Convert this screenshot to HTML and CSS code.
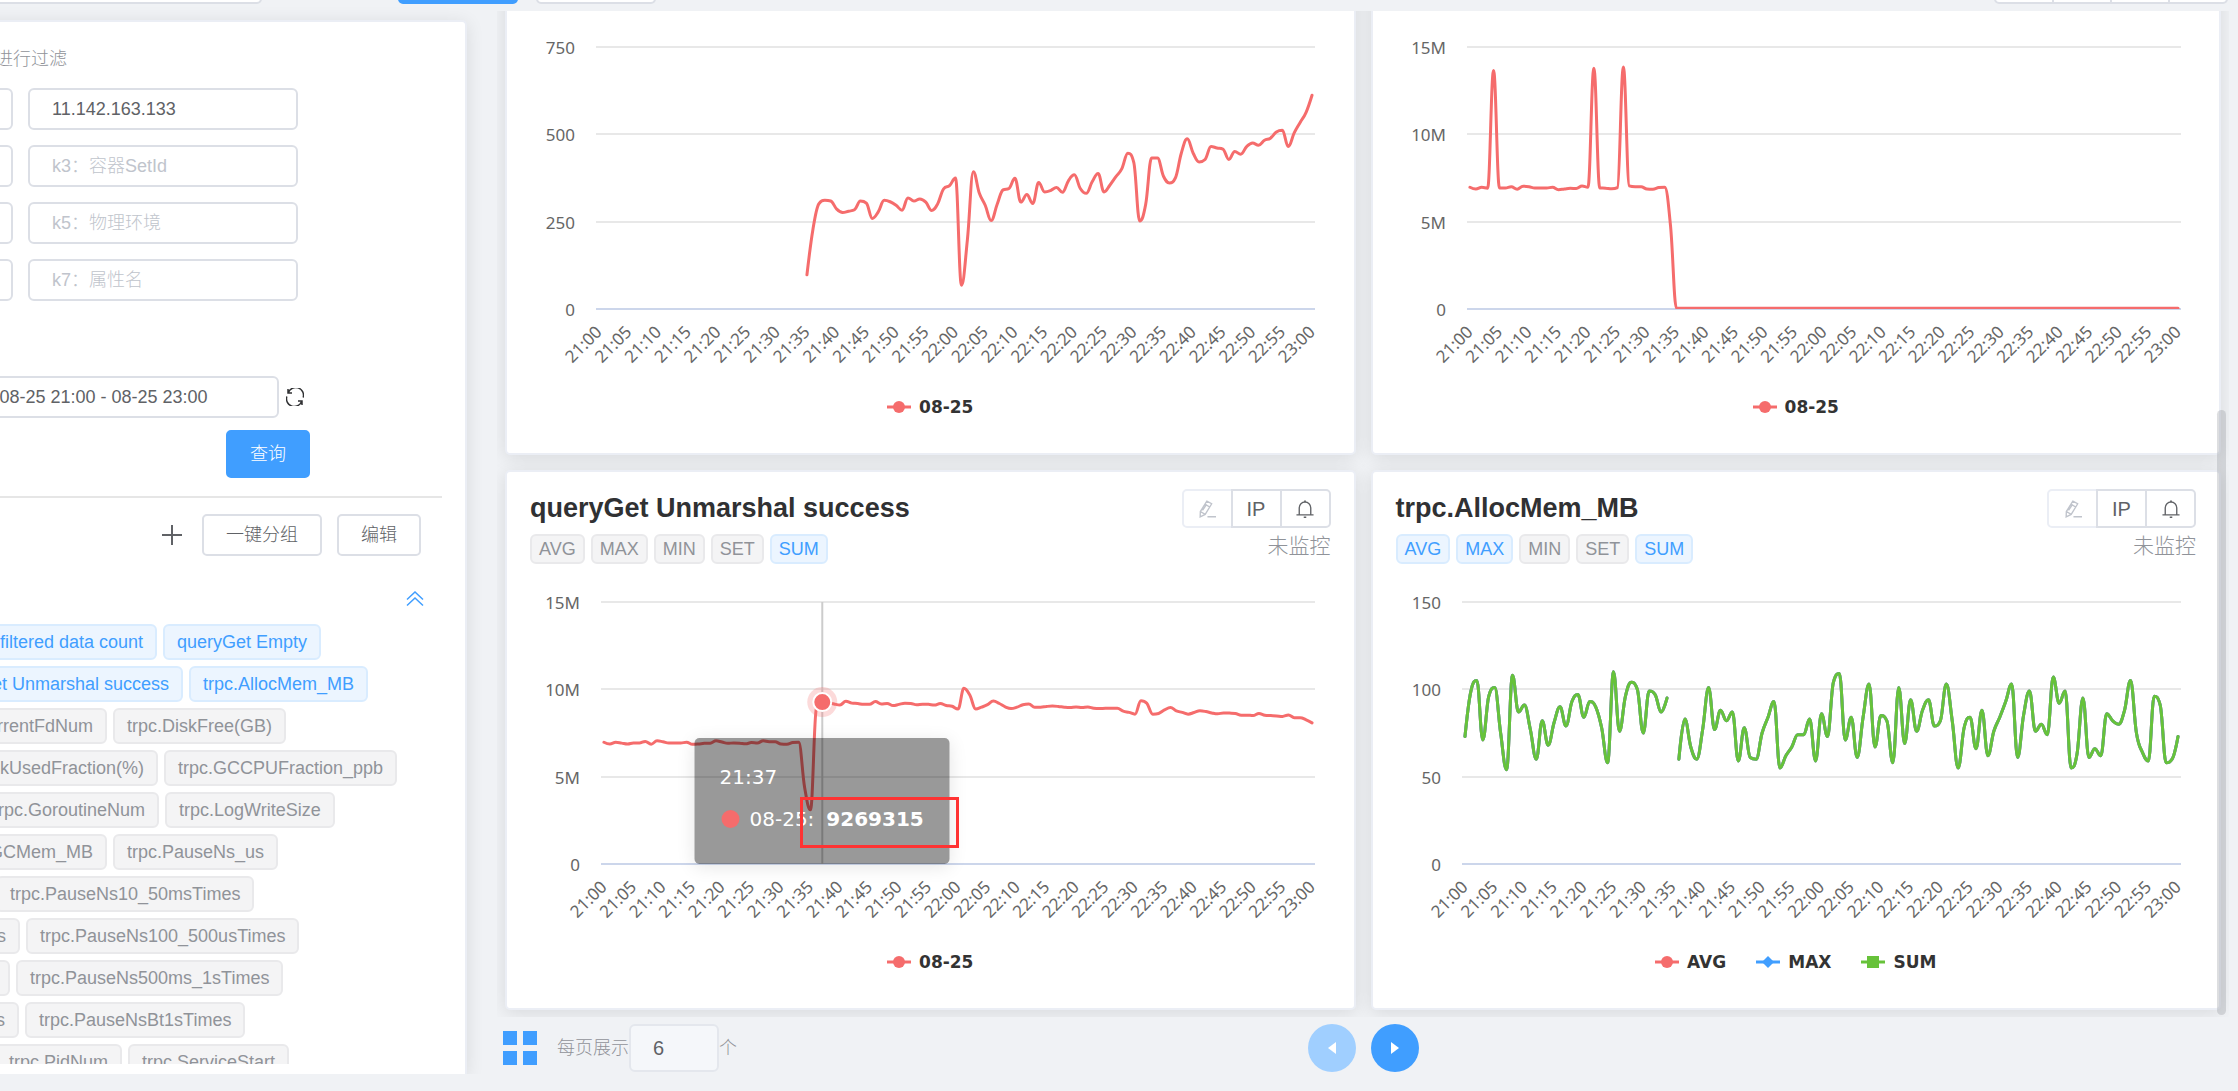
FILE: index.html
```html
<!DOCTYPE html>
<html lang="zh-CN">
<head>
<meta charset="utf-8">
<meta name="viewport" content="width=device-width, initial-scale=1">
<title>queryGet Unmarshal success</title>
<link rel="stylesheet" href="styles.css">
</head>
<body>
<svg class="sprite" aria-hidden="true">
  <symbol id="icon-edit" viewBox="0 0 20 20">
    <path d="M9.8 1.2 15.2 4.2 8 16 2.4 18.8 2.6 12.8Z M7.6 4.6 13 7.8 M2.6 12.8 8 16 M5 11.6 9.6 4.8 M10.5 18.6H20"/>
  </symbol>
  <symbol id="icon-bell" viewBox="0 0 20 20">
    <path d="M3.6 16.5V8.6a6.4 6.4 0 0 1 12.8 0V16.5 M0.5 16.5H19.5 M9 1.2H11 M8.6 19.2H11.4"/>
  </symbol>
</svg>
<div class="app">
  <header class="topbar">
    <input class="topbar-search" type="text" aria-label="搜索">
    <button class="topbar-button topbar-button-primary" type="button" aria-label="查询"></button>
    <button class="topbar-button" type="button" aria-label="重置"></button>
    <div class="topbar-group">
      <button type="button" aria-label="1"></button><button type="button" aria-label="2"></button><button type="button" aria-label="3"></button><button type="button" aria-label="4"></button>
    </div>
  </header>

  <aside class="side">
    <div class="panel">
      <p class="panel-hint">进行过滤</p>
      <div class="filters">
        <input class="field" type="text" aria-label="k0"><input class="field" type="text" aria-label="k1" value="11.142.163.133">
        <input class="field" type="text" aria-label="k2"><input class="field" type="text" aria-label="k3" placeholder="k3：容器SetId">
        <input class="field" type="text" aria-label="k4"><input class="field" type="text" aria-label="k5" placeholder="k5：物理环境">
        <input class="field" type="text" aria-label="k6"><input class="field" type="text" aria-label="k7" placeholder="k7：属性名">
      </div>
      <div class="range">
        <input class="field field-range" type="text" aria-label="时间" value="08-25 21:00 - 08-25 23:00">
        <button class="icon-button" type="button" aria-label="刷新">
          <svg class="icon icon-refresh" viewBox="0 0 18 18"><path d="M2 1V5H6 M2.4 4.6A7.8 7.8 0 0 1 17.2 9.5 M16 17V13H12 M15.6 13.4A7.8 7.8 0 0 1 0.8 8.5"/></svg>
        </button>
      </div>
      <div class="submit"><button class="button button-primary" type="button">查询</button></div>
      <hr class="rule">
      <div class="actions">
        <button class="icon-button" type="button" aria-label="添加">
          <svg class="icon icon-plus" viewBox="0 0 20 20"><path d="M10 0V20 M0 10H20"/></svg>
        </button>
        <button class="button button-wide" type="button">一键分组</button>
        <button class="button" type="button">编辑</button>
      </div>
      <div class="fold">
        <button class="icon-button" type="button" aria-label="收起">
          <svg class="icon icon-fold" viewBox="0 0 18 16"><path d="M1 8.5 9 1 17 8.5 M1 14.5 9 7 17 14.5"/></svg>
        </button>
      </div>
      <div class="metrics">
        <div class="metric-row" style="--lead:414px"><span class="tag tag-on">filtered data count</span><span class="tag tag-on">queryGet Empty</span></div>
        <div class="metric-row" style="--lead:440px"><span class="tag tag-on">queryGet Unmarshal success</span><span class="tag tag-on">trpc.AllocMem_MB</span></div>
        <div class="metric-row" style="--lead:364px"><span class="tag">trpc.CurrentFdNum</span><span class="tag">trpc.DiskFree(GB)</span></div>
        <div class="metric-row" style="--lead:415px"><span class="tag">trpc.DiskUsedFraction(%)</span><span class="tag">trpc.GCCPUFraction_ppb</span></div>
        <div class="metric-row" style="--lead:416px"><span class="tag">trpc.GoroutineNum</span><span class="tag">trpc.LogWriteSize</span></div>
        <div class="metric-row" style="--lead:364px"><span class="tag">trpc.NextGCMem_MB</span><span class="tag">trpc.PauseNs_us</span></div>
        <div class="metric-row" style="--lead:247px"><span class="tag"></span><span class="tag">trpc.PauseNs10_50msTimes</span></div>
        <div class="metric-row" style="--lead:277px"><span class="tag">trpc.PauseNs100_500msTimes</span><span class="tag">trpc.PauseNs100_500usTimes</span></div>
        <div class="metric-row" style="--lead:267px"><span class="tag"></span><span class="tag">trpc.PauseNs500ms_1sTimes</span></div>
        <div class="metric-row" style="--lead:276px"><span class="tag">trpc.PauseNs50_100msTimes</span><span class="tag">trpc.PauseNsBt1sTimes</span></div>
        <div class="metric-row" style="--lead:379px"><span class="tag">trpc.PidNum</span><span class="tag">trpc.ServiceStart</span></div>
      </div>
    </div>
  </aside>

  <main class="main">
    <div class="board">
      <div class="cards">
        <section class="card">
          <div class="card-head"></div>
          <div class="chart" data-chart="empty"></div>
          <ul class="legend"><li><svg class="key key-red" viewBox="0 0 24 14"><path d="M0 7H24"/><circle cx="12" cy="7" r="6"/></svg>08-25</li></ul>
        </section>
        <section class="card">
          <div class="card-head"></div>
          <div class="chart" data-chart="total"></div>
          <ul class="legend"><li><svg class="key key-red" viewBox="0 0 24 14"><path d="M0 7H24"/><circle cx="12" cy="7" r="6"/></svg>08-25</li></ul>
        </section>
        <section class="card">
          <div class="card-head">
            <div class="card-info">
              <h2 class="card-title">queryGet Unmarshal success</h2>
              <div class="modes"><span class="mode">AVG</span><span class="mode">MAX</span><span class="mode">MIN</span><span class="mode">SET</span><span class="mode tag-on">SUM</span></div>
            </div>
            <div class="card-tools">
              <div class="tool-group">
                <button class="tool" type="button" disabled aria-label="编辑"><svg class="icon icon-tool"><use href="#icon-edit"/></svg></button>
                <button class="tool" type="button">IP</button>
                <button class="tool" type="button" aria-label="告警"><svg class="icon icon-tool"><use href="#icon-bell"/></svg></button>
              </div>
              <span class="watch">未监控</span>
            </div>
          </div>
          <div class="chart" data-chart="success">
            <div class="tooltip">
              <div>21:37</div>
              <div class="tooltip-line"><i class="tooltip-dot"></i><span>08-25:</span><b>9269315</b></div>
            </div>
            <div class="callout"></div>
          </div>
          <ul class="legend"><li><svg class="key key-red" viewBox="0 0 24 14"><path d="M0 7H24"/><circle cx="12" cy="7" r="6"/></svg>08-25</li></ul>
        </section>
        <section class="card">
          <div class="card-head">
            <div class="card-info">
              <h2 class="card-title">trpc.AllocMem_MB</h2>
              <div class="modes"><span class="mode tag-on">AVG</span><span class="mode tag-on">MAX</span><span class="mode">MIN</span><span class="mode">SET</span><span class="mode tag-on">SUM</span></div>
            </div>
            <div class="card-tools">
              <div class="tool-group">
                <button class="tool" type="button" disabled aria-label="编辑"><svg class="icon icon-tool"><use href="#icon-edit"/></svg></button>
                <button class="tool" type="button">IP</button>
                <button class="tool" type="button" aria-label="告警"><svg class="icon icon-tool"><use href="#icon-bell"/></svg></button>
              </div>
              <span class="watch">未监控</span>
            </div>
          </div>
          <div class="chart" data-chart="memory"></div>
          <ul class="legend">
            <li><svg class="key key-red" viewBox="0 0 24 14"><path d="M0 7H24"/><circle cx="12" cy="7" r="6"/></svg>AVG</li>
            <li><svg class="key key-blue" viewBox="0 0 24 14"><path d="M0 7H24"/><path class="key-fill" d="M12 1 18 7 12 13 6 7Z"/></svg>MAX</li>
            <li><svg class="key key-green" viewBox="0 0 24 14"><path d="M0 7H24"/><rect x="6" y="1" width="12" height="12"/></svg>SUM</li>
          </ul>
        </section>
      </div>
      <div class="scroll-thumb"></div>
    </div>
    <footer class="pager">
      <div class="page-size">
        <svg class="tiles" viewBox="0 0 34 34" aria-hidden="true"><path d="M0 0h14v14H0zM20 0h14v14H20zM0 20h14v14H0zM20 20h14v14H20z"/></svg>
        <label for="page-size">每页展示</label><input id="page-size" class="size-field" type="text" value="6"><span>个</span>
      </div>
      <div class="pager-buttons">
        <button class="round round-off" type="button" aria-label="上一页" disabled><svg viewBox="0 0 8 12"><path d="M8 0V12L0 6Z"/></svg></button>
        <button class="round" type="button" aria-label="下一页"><svg viewBox="0 0 8 12"><path d="M0 0V12L8 6Z"/></svg></button>
      </div>
    </footer>
  </main>
</div>
<script src="charts.js"></script>
</body>
</html>
```
FILE: styles.css
```css
* { box-sizing: border-box; }

body {
  margin: 0;
  overflow: hidden;
  background: #f0f2f5;
  color: #606266;
  font: 300 18px/24px "Liberation Sans", Arial, "Noto Sans CJK SC", sans-serif;
}

button, input { font: inherit; color: inherit; }
p, ul, h2 { margin: 0; padding: 0; }

.sprite { position: absolute; width: 0; height: 0; }

/* The shell is scrolled sideways, so its left part lies outside the window. */
.app {
  display: grid;
  grid-template: auto minmax(0, 1fr) / 763px minmax(0, 1fr);
  column-gap: 15px;
  height: 100vh;
  margin-left: -281px;
}

/* top bar */
.topbar {
  grid-column: 1 / -1;
  display: flex;
  height: 42px;
  margin-top: -38px;
  padding-right: 10px;
}
.topbar-search {
  width: 543px;
  margin-right: 136px;
  border: 2px solid #dcdfe6;
  border-radius: 5px;
  background: #fff;
}
.topbar-button {
  width: 120px;
  margin-right: 18px;
  border: 2px solid #dcdfe6;
  border-radius: 5px;
  background: #fff;
}
.topbar-button-primary { border-color: #409eff; background: #409eff; }
.topbar-group { display: flex; margin-left: auto; }
.topbar-group button {
  width: 60px;
  margin-left: -2px;
  border: 2px solid #dcdfe6;
  background: #fff;
}
.topbar-group button:first-child { border-bottom-left-radius: 5px; }
.topbar-group button:last-child { border-bottom-right-radius: 5px; }

/* side panel */
.side {
  display: flex;
  margin-bottom: 17px;
  padding: 16px 15px 0 0;
  overflow: hidden;
}
.panel {
  flex: 1;
  display: flex;
  flex-direction: column;
  min-height: 0;
  padding: 24px 23px 10px 22px;
  border: 2px solid #ebeef5;
  border-bottom: 0;
  border-radius: 5px 5px 0 0;
  background: #fff;
  box-shadow: 0 3px 18px rgba(0, 0, 0, .1);
}
.panel > * { flex: none; }
.panel-hint { width: 324px; margin-bottom: 16px; line-height: 26px; text-align: right; color: #909399; }
.filters { display: grid; grid-template-columns: 270px 270px; gap: 15px; }
.field {
  width: 270px;
  height: 42px;
  padding: 0 22px;
  border: 2px solid #dcdfe6;
  border-radius: 6px;
  background: #fff;
}
.field::placeholder { color: #c0c4cc; opacity: 1; }
.range { display: flex; justify-content: flex-end; align-items: center; gap: 7px; width: 561px; margin-top: 75px; }
.field-range { width: 351px; text-align: center; }
.submit { display: flex; justify-content: flex-end; width: 567px; margin-top: 12px; }
.button {
  width: 84px;
  height: 42px;
  padding: 0;
  border: 2px solid #dcdfe6;
  border-radius: 5px;
  background: #fff;
}
.button-wide { width: 120px; }
.button-primary { height: 48px; border-color: #409eff; background: #409eff; color: #fff; }
.icon-button { display: flex; padding: 0; border: 0; background: none; }
.icon { fill: none; stroke: currentColor; stroke-width: 1.5; }
.icon-refresh { width: 18px; height: 18px; color: #303133; }
.icon-plus { width: 20px; height: 20px; margin-right: 5px; stroke-width: 2; }
.icon-fold { width: 18px; height: 16px; color: #409eff; }
.rule { width: 100%; height: 2px; margin: 18px 0 16px; border: 0; background: #e6e6e6; }
.actions { display: flex; justify-content: flex-end; align-items: center; gap: 15px; padding-right: 21px; }
.fold { display: flex; justify-content: flex-end; margin: 35px 0 17px; padding-right: 18px; }
.panel > .metrics { flex: 1 1 0; min-height: 0; overflow: hidden; }
.metric-row {
  display: grid;
  grid-template-columns: var(--lead) auto;
  justify-content: start;
  column-gap: 6px;
  margin-bottom: 6px;
}
.metric-row .tag:first-child { justify-self: end; }
.tag {
  height: 36px;
  padding: 0 12px;
  border: 2px solid #e9e9eb;
  border-radius: 6px;
  background: #f4f4f5;
  color: #909399;
  line-height: 32px;
  white-space: nowrap;
}
.tag-on { border-color: #d9ecff; background: #ecf5ff; color: #409eff; }

/* board of cards */
.main { display: flex; flex-direction: column; min-width: 0; padding: 7px 9px 0 0; }
.board { position: relative; flex: 1 1 0; min-height: 0; padding: 0 8px; overflow: hidden; }
.cards {
  display: grid;
  grid-template-columns: repeat(2, minmax(0, 1fr));
  gap: 15px;
  margin-top: -96px;
}
.card {
  padding: 17px 23px 34px;
  border: 2px solid #ebeef5;
  border-radius: 5px;
  background: #fff;
  box-shadow: 0 3px 18px rgba(0, 0, 0, .1);
}
.card-head { display: flex; justify-content: space-between; height: 75px; margin-bottom: 26px; }
.card-title { color: #303133; font-size: 27px; line-height: 38px; margin-bottom: 7px; }
.modes { display: flex; gap: 6px; }
.mode {
  height: 30px;
  padding: 0 7px;
  border: 2px solid #e9e9eb;
  border-radius: 6px;
  background: #f4f4f5;
  color: #909399;
  line-height: 26px;
}
.mode.tag-on { border-color: #d9ecff; background: #ecf5ff; color: #409eff; }
.card-tools { display: flex; flex-direction: column; align-items: flex-end; gap: 6px; }
.tool-group { display: flex; }
.tool {
  display: flex;
  justify-content: center;
  align-items: center;
  width: 51px;
  height: 39px;
  margin-left: -2px;
  padding: 0;
  border: 2px solid #dcdfe6;
  background: #fff;
  font-size: 20px;
}
.tool:first-child { border-radius: 5px 0 0 5px; }
.tool:last-child { border-radius: 0 5px 5px 0; }
.tool:disabled { border-color: #ebeef5; color: #c0c4cc; }
.icon-tool { width: 18px; height: 18px; }
.watch { color: #909399; font-size: 21px; }

/* charts */
.chart { position: relative; height: 335px; margin-bottom: 25px; }
.plot { display: block; width: 100%; height: 100%; overflow: visible; font-family: "Noto Sans", sans-serif; font-weight: 400; }
.plot-grid { stroke: #e8e8e8; stroke-width: 2; }
.plot-axis { stroke: #ccd6eb; stroke-width: 2; }
.plot-cross { stroke: #ccc; stroke-width: 2; }
.plot-line { fill: none; stroke-width: 3; stroke-linejoin: round; stroke-linecap: round; }
.plot-halo { fill: #f56c6c; opacity: .25; }
.plot-point { fill: #f56c6c; stroke: #fff; stroke-width: 2; }
.plot text { fill: #666; text-anchor: end; }
.plot-value, .plot-time { font-size: 17px; }
.legend {
  display: flex;
  justify-content: center;
  gap: 30px;
  list-style: none;
  color: #333;
  font: bold 17px/24px "DejaVu Sans", sans-serif;
}
.legend li { display: flex; align-items: center; gap: 8px; }
.key { width: 24px; height: 14px; fill: currentColor; stroke: none; }
.key path { stroke: currentColor; stroke-width: 3; }
.key .key-fill { stroke: none; }
.key-red { color: #f56c6c; }
.key-blue { color: #409eff; }
.key-green { color: #67c23a; }
.tooltip {
  position: absolute;
  left: var(--point-x);
  top: 148px;
  width: 255px;
  height: 126px;
  padding: 25px;
  border-radius: 5px;
  transform: translateX(-50%);
  background: rgba(0, 0, 0, .4);
  box-shadow: 0 3px 18px rgba(0, 0, 0, .1);
  color: #fff;
  font: 20px/28px "DejaVu Sans", sans-serif;
}
.tooltip-line { display: flex; align-items: center; margin-top: 14px; }
.tooltip-dot { width: 18px; height: 18px; margin: 0 10px 0 2px; border-radius: 50%; background: #f56c6c; }
.tooltip-line b { margin-left: 12px; }
.callout {
  position: absolute;
  left: var(--point-x);
  top: 207px;
  width: 159px;
  height: 51px;
  margin-left: -22px;
  border: 3px solid #f33;
}
.scroll-thumb {
  position: absolute;
  top: 399px;
  right: 3px;
  bottom: 2px;
  width: 9px;
  border-radius: 5px;
  background: rgba(144, 147, 153, .3);
}

/* footer */
.pager {
  display: grid;
  grid-template-columns: 1fr auto 1fr;
  padding: 7px 0 19px;
}
.page-size { display: flex; align-items: center; padding-left: 6px; color: #909399; }
.tiles { width: 34px; height: 34px; margin-right: 20px; fill: #409eff; }
.size-field {
  width: 90px;
  height: 48px;
  padding: 0 22px;
  border: 2px solid #e4e7ed;
  border-radius: 6px;
  background: #f5f7fa;
  color: #606266;
  font-size: 20px;
}
.pager-buttons { display: flex; gap: 15px; }
.round {
  display: flex;
  justify-content: center;
  align-items: center;
  width: 48px;
  height: 48px;
  padding: 0;
  border: 0;
  border-radius: 50%;
  background: #409eff;
}
.round-off { background: #a0cfff; }
.round svg { width: 8px; height: 12px; fill: #fff; }
```
FILE: charts.js
```javascript
const charts = {
  empty: {
    left: 66, labels: ['0', '250', '500', '750'], max: 750, start: 35, colors: ['#f56c6c'],
    data: [98,227,301,311,309,286,276,280,284,309,303,259,278,311,307,297,283,318,309,315,306,282,301,344,353,375,68,198,393,332,297,253,299,341,345,374,306,328,302,362,335,339,348,334,367,384,345,331,364,388,335,355,379,402,446,420,252,299,432,432,380,361,375,446,487,446,421,428,465,461,458,428,451,443,465,475,469,483,489,507,512,465,504,534,563,612]
  },
  total: {
    left: 71, labels: ['0', '5M', '10M', '15M'], max: 15, start: 0, colors: ['#f56c6c'],
    data: [6.97,6.87,6.97,6.92,13.66,6.93,6.93,7,6.86,7.03,7,6.93,6.93,6.93,6.97,6.83,6.87,6.91,6.9,7.04,6.97,13.78,6.93,6.92,6.88,6.95,13.85,7.05,7,7,6.87,6.86,6.95,6.97,4.73].concat(Array(86).fill(0.04))
  },
  success: {
    left: 71, labels: ['0', '5M', '10M', '15M'], max: 15, start: 0, colors: ['#f56c6c'], active: 37,
    data: [6.97,6.87,6.97,6.92,6.87,6.93,6.93,7.02,6.86,7.05,7,6.93,6.93,6.93,6.97,6.85,6.87,6.91,6.92,7.05,6.98,6.91,6.93,6.92,6.88,6.95,6.93,7.05,7,7,6.87,6.86,6.95,6.97,4.4,3.1,8.9,9.27,9.25,9.16,9.1,9.32,9.21,9.19,9.14,9.14,9.3,9.16,9.19,9.07,9.14,9.2,9.19,9.12,9.15,9.14,9.1,9.19,9.07,9.03,8.87,10.06,9.67,8.87,8.98,9.12,9.33,9.19,9,8.9,8.98,9.12,9.16,8.98,8.98,9.02,9.04,9.02,8.98,8.96,8.99,8.96,8.99,8.92,8.9,8.91,8.91,8.91,8.75,8.68,8.58,9.35,9.2,8.58,8.62,8.82,8.96,8.77,8.68,8.58,8.67,8.77,8.73,8.65,8.6,8.65,8.64,8.62,8.52,8.52,8.5,8.62,8.52,8.5,8.48,8.45,8.53,8.38,8.38,8.25,8.08]
  },
  memory: {
    left: 66, labels: ['0', '50', '100', '150'], max: 150, start: 0, colors: ['#f56c6c', '#409eff', '#67c23a'],
    data: [73,99,105,71,96,101,75,54,108,87,91,77,60,82,68,81,90,79,93,97,84,93,90,78,58,110,76,96,104,100,75,99,97,87,95,null,60,83,67,60,77,101,77,88,82,87,59,78,61,60,75,84,93,55,62,67,74,74,83,59,86,73,104,109,71,84,61,84,103,67,85,82,58,101,69,94,76,88,94,79,82,103,82,55,78,84,66,88,62,76,84,93,103,61,85,99,76,80,74,107,92,99,55,63,95,61,66,62,86,82,80,88,105,75,64,59,96,91,58,60,73]
  }
};

const TOP = 12;
const HEIGHT = 262;
const SLOTS = 121;
const NS = 'http://www.w3.org/2000/svg';

function add(parent, name, attrs, text) {
  const node = document.createElementNS(NS, name);
  Object.entries(attrs).forEach(([key, value]) => node.setAttribute(key, value));
  if (text !== undefined) node.textContent = text;
  parent.appendChild(node);
  return node;
}

// Cubic spline through the points, held inside each pair of neighbours.
function spline(points) {
  let path = '';
  let last = null;
  let out = null;
  points.forEach((p, i) => {
    if (!p) { last = null; return; }
    const next = points[i + 1];
    if (!last) {
      path += `M${p[0]} ${p[1]}`;
      out = p;
      last = p;
      return;
    }
    let into = p;
    let away = p;
    if (next) {
      let lx = (1.5 * p[0] + last[0]) / 2.5;
      let ly = (1.5 * p[1] + last[1]) / 2.5;
      let rx = (1.5 * p[0] + next[0]) / 2.5;
      let ry = (1.5 * p[1] + next[1]) / 2.5;
      const shift = (ry - ly) * (rx - p[0]) / (rx - lx) + p[1] - ry;
      ly += shift;
      ry += shift;
      if (ly > last[1] && ly > p[1]) { ly = Math.max(last[1], p[1]); ry = 2 * p[1] - ly; }
      else if (ly < last[1] && ly < p[1]) { ly = Math.min(last[1], p[1]); ry = 2 * p[1] - ly; }
      if (ry > next[1] && ry > p[1]) { ry = Math.max(next[1], p[1]); ly = 2 * p[1] - ry; }
      else if (ry < next[1] && ry < p[1]) { ry = Math.min(next[1], p[1]); ly = 2 * p[1] - ry; }
      into = [lx, ly];
      away = [rx, ry];
    }
    path += `C${out[0]} ${out[1]} ${into[0]} ${into[1]} ${p[0]} ${p[1]}`;
    out = away;
    last = p;
  });
  return path;
}

function draw(box) {
  const id = box.dataset.chart;
  const chart = charts[id];
  const old = box.querySelector('.plot');
  if (old) old.remove();
  const svg = document.createElementNS(NS, 'svg');
  svg.setAttribute('class', 'plot');
  box.prepend(svg);

  const right = box.clientWidth - 16;
  const band = (right - chart.left) / SLOTS;
  const x = i => chart.left + (i + 0.5) * band;
  const y = v => TOP + HEIGHT * (1 - v / chart.max);

  const clip = add(svg, 'clipPath', { id: `clip-${id}` });
  add(clip, 'rect', { x: chart.left, y: TOP, width: right - chart.left, height: HEIGHT });

  chart.labels.forEach((label, i) => {
    const line = Math.round(TOP + HEIGHT * (1 - i / 3));
    add(svg, 'line', { class: i ? 'plot-grid' : 'plot-axis', x1: chart.left, x2: right, y1: line, y2: line });
    add(svg, 'text', { class: 'plot-value', x: chart.left - 21, y: line + 7 }, label);
  });
  for (let i = 0; i < SLOTS; i += 5) {
    const time = `${21 + Math.floor(i / 60)}:${String(i % 60).padStart(2, '0')}`;
    add(svg, 'text', { class: 'plot-time', transform: `translate(${x(i) + 4} ${TOP + HEIGHT + 24}) rotate(-45)` }, time);
  }
  if (chart.active) {
    add(svg, 'line', { class: 'plot-cross', x1: x(chart.active), x2: x(chart.active), y1: TOP, y2: TOP + HEIGHT });
    box.style.setProperty('--point-x', `${Math.round(x(chart.active))}px`);
  }
  const points = Array(chart.start).fill(null).concat(chart.data.map((v, i) => (v === null ? null : [x(i + chart.start), y(v)])));
  chart.colors.forEach(color => add(svg, 'path', { class: 'plot-line', stroke: color, d: spline(points), 'clip-path': `url(#clip-${id})` }));
  if (chart.active) {
    const [px, py] = points[chart.active];
    add(svg, 'circle', { class: 'plot-halo', cx: px, cy: py, r: 15 });
    add(svg, 'circle', { class: 'plot-point', cx: px, cy: py, r: 9 });
  }
}

function drawAll() {
  document.querySelectorAll('.chart').forEach(draw);
}

drawAll();
window.addEventListener('resize', drawAll);
```
